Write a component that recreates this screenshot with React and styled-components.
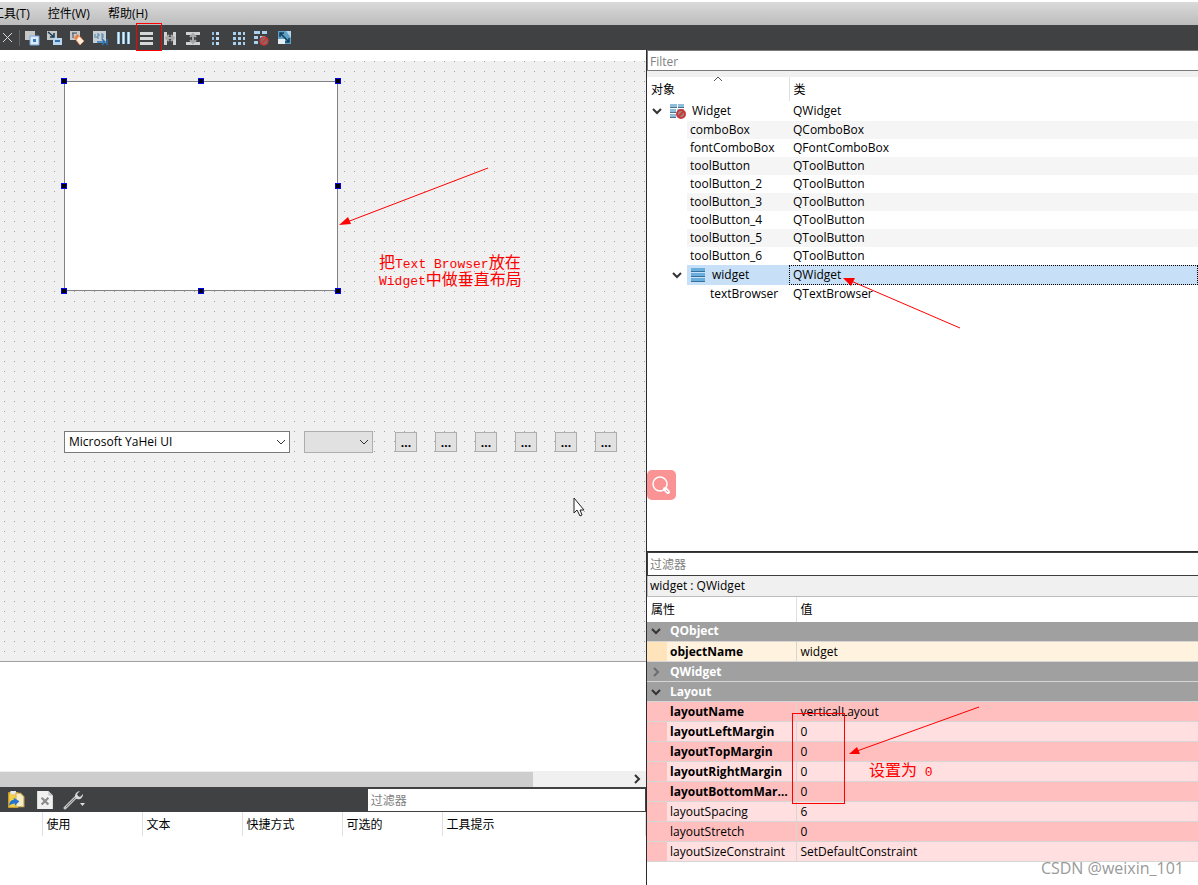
import React from 'react';
import styled, { createGlobalStyle } from 'styled-components';

const GlobalStyle = createGlobalStyle`
  * {
    box-sizing: border-box;
  }
  body {
    margin: 0;
    background: white;
    color: black;
    font-family: 'Open Sans', 'Noto Sans CJK SC', sans-serif;
    font-size: 12px;
    line-height: 18px;
  }
  button, input, select {
    font: inherit;
    color: inherit;
    margin: 0;
    padding: 0;
    border: none;
    border-radius: 0;
  }
  table {
    border-collapse: collapse;
    border-spacing: 0;
  }
  th, td {
    padding: 0;
    font-weight: normal;
    text-align: left;
    white-space: nowrap;
  }
`;

const Page = styled.div`
  display: flex;
  flex-direction: column;
  min-height: 100vh;
  overflow: hidden;
`;

// The first menu is scrolled partly out of view
const MenuBar = styled.nav`
  display: flex;
  align-items: center;
  height: 23px;
  margin-top: 2px;
  margin-left: -17px;
  background: linear-gradient(#dadada, #bcbcbc);
`;

const MenuItem = styled.button`
  padding: 0 9px;
  background: none;
  white-space: nowrap;
`;

const ToolBar = styled.div`
  display: flex;
  align-items: center;
  height: 25px;
  background: #404142;
`;

const ToolBarButton = styled.button`
  position: relative;
  display: grid;
  place-items: center;
  width: ${({ $width }) => $width || 23}px;
  height: 23px;
  background: none;
`;

const Separator = styled.span`
  width: 1px;
  height: 16px;
  margin-left: 4px;
  background: #626364;
`;

const Highlight = styled.span`
  position: absolute;
  top: -3px;
  left: 1px;
  width: 26px;
  height: 28px;
  border: 1px solid red;
`;

const Main = styled.main`
  display: grid;
  grid-template-columns: minmax(0, 647fr) minmax(0, 551fr);
  flex: 1;
`;

const LeftSide = styled.div`
  display: flex;
  flex-direction: column;
  border-right: 1px solid #2a2b2c;
`;

const RightSide = styled.div`
  display: flex;
  flex-direction: column;
`;

// Form being edited, with a dot every 10px
const FormCanvas = styled.section`
  position: relative;
  flex: 1;
  min-height: 480px;
  margin-top: 11px;
  border-bottom: 1px solid #a0a0a0;
  background: conic-gradient(at 1px 1px, #f0f0f0 75%, #a0a0a0 0) 4px 0 / 10px 10px;
`;

const SelectedWidget = styled.div`
  position: absolute;
  left: 64px;
  top: 20px;
  width: 274px;
  height: 210px;
  box-shadow: inset 0 0 0 1px #828282;
  background: white;
`;

const Handle = styled.span`
  position: absolute;
  left: ${({ $x }) => $x};
  top: ${({ $y }) => $y};
  width: 6px;
  height: 6px;
  margin: -3px;
  border: 1px solid #0000f0;
  background: black;
`;

const FormRow = styled.div`
  position: absolute;
  left: 64px;
  top: 370px;
  display: flex;
  align-items: center;
`;

const ComboWrap = styled.label`
  display: grid;
  align-items: center;
  width: ${({ $width }) => $width}px;
  margin-right: ${({ $gap }) => $gap}px;

  > * {
    grid-area: 1 / 1;
  }
  > svg {
    justify-self: end;
    margin-right: 4px;
    pointer-events: none;
  }
`;

const Combo = styled.select`
  appearance: none;
  width: 100%;
  height: 22px;
  padding: 0 4px;
  border: 1px solid ${({ $flat }) => ($flat ? '#adadad' : '#7a7a7a')};
  background: ${({ $flat }) => ($flat ? '#e1e1e1' : 'white')};
`;

const ToolButton = styled.button`
  width: 22px;
  height: 20px;
  margin-right: 18px;
  border: 1px solid #adadad;
  background: #e1e1e1;
  font-weight: bold;
  line-height: 20px;
`;

const Note = styled.p`
  position: absolute;
  left: ${({ $left }) => $left}px;
  top: ${({ $top }) => $top}px;
  margin: 0;
  color: red;
  font-family: 'Liberation Mono', 'Noto Sans CJK SC', monospace;
  font-size: 16px;
  line-height: 16px;
  white-space: nowrap;
`;

const NoteLatin = styled.span`
  font-size: 13px;
`;

const Overlay = styled.svg`
  position: absolute;
  left: ${({ $left }) => $left}px;
  top: ${({ $top }) => $top}px;
  overflow: visible;
  pointer-events: none;
`;

const EmptyArea = styled.div`
  height: 109px;
  background: white;
`;

const ScrollBar = styled.div`
  display: flex;
  align-items: center;
  justify-content: space-between;
  height: 16px;
  padding-right: 4px;
  background: #f0f0f0;
`;

const ScrollThumb = styled.div`
  width: 83%;
  height: 15px;
  background: #cdcdcd;
`;

const ActionBar = styled.div`
  display: flex;
  align-items: center;
  justify-content: space-between;
  height: 25px;
  padding-right: 1px;
  background: #404142;
`;

const ActionButtons = styled.div`
  display: flex;
  align-items: center;
  gap: 6px;
  padding-left: 4px;
`;

const FilterInput = styled.input`
  width: 100%;
  height: ${({ $height }) => $height}px;
  padding: 1px 2px 0;
  border: 1px solid ${({ $edge }) => $edge || 'white'};
  border-width: 1px 0 1px 1px;
  background: white;
  outline: none;

  &::placeholder {
    color: #808080;
    opacity: 1;
  }
`;

const ActionFilter = styled.div`
  display: flex;
  width: 43%;
`;

const ActionTable = styled.table`
  width: 100%;
  height: 24px;
  margin-bottom: 49px;
  table-layout: fixed;

  th {
    width: 100px;
    padding-top: 2px;
    padding-left: 4px;
    border-right: 1px solid #e0e0e0;
  }
  th:first-child {
    width: 42px;
  }
  th:last-child {
    width: auto;
  }
`;

const TreePanel = styled.section`
  position: relative;
  flex: 1;
  border-top: 6px solid #f0f0f0;
  background: white;
`;

const TreeTable = styled.table`
  width: 100%;
  table-layout: fixed;
`;

const TreeHead = styled.th`
  position: relative;
  width: ${({ $width }) => $width || 'auto'};
  height: 24px;
  padding-top: 2px;
  padding-left: 4px;
  border-right: ${({ $line }) => ($line ? '1px solid #e0e0e0' : 'none')};

  svg {
    position: absolute;
    left: 66px;
    top: -3px;
  }
`;

const rowColor = ({ $selected, $shaded }) => {
  if ($selected) return '#c7e0f7';
  return $shaded ? '#f5f5f5' : 'white';
};

const TreeRow = styled.tr`
  height: ${({ $tall }) => ($tall ? 20 : 18)}px;

  td:first-child {
    background: linear-gradient(to right, white 40px, transparent 40px), ${rowColor};
  }
  td:last-child {
    padding-left: 4px;
    background: ${rowColor};
    outline: ${({ $selected }) => ($selected ? '1px dotted black' : 'none')};
    outline-offset: -1px;
  }
`;

const TreeName = styled.div`
  display: flex;
  align-items: center;
  gap: 6px;
  padding-left: ${({ $indent }) => $indent}px;
`;

const TreeArrow = styled.span`
  display: flex;
  margin-right: 2px;
`;

const SearchButton = styled.button`
  position: absolute;
  left: 0;
  bottom: 51px;
  display: grid;
  place-items: center;
  width: 29px;
  height: 30px;
  border-radius: 5px;
  background: #fa9393;
`;

const PropertyPanel = styled.section`
  position: relative;
  padding-bottom: 23px;
  border-top: 1px solid #2a2b2c;
`;

const ObjectLabel = styled.div`
  height: 21px;
  padding: 1px 2px;
  border: 1px solid #bcbcbc;
  border-width: 0 0 1px 1px;
  background: #f0f0f0;
`;

const PropertyTable = styled.table`
  width: 100%;
  table-layout: fixed;

  th {
    height: 25px;
    padding-top: 2px;
    padding-left: 4px;
  }
  th:first-child {
    width: 149px;
    border-right: 1px solid #e0e0e0;
  }
`;

const GroupRow = styled.tr`
  height: 20px;
  border-bottom: 1px solid #d6d6d6;
  background: #a0a0a0;
`;

const GroupName = styled.div`
  display: flex;
  align-items: center;
  gap: 9px;
  padding-left: 4px;
  color: white;
  font-weight: bold;
`;

const PropertyRow = styled.tr`
  height: 20px;
  border-bottom: 1px solid #d6d6d6;
  background: ${({ $color }) => $color};

  td:first-child {
    padding-left: 23px;
    padding-right: 4px;
    border-right: 1px solid #d6d6d6;
    background: linear-gradient(to right, ${({ $edge }) => $edge} 20px, transparent 20px);
    font-weight: ${({ $changed }) => ($changed ? 'bold' : 'normal')};
    overflow: hidden;
    text-overflow: ellipsis;
  }
  td:last-child {
    padding-left: 4px;
  }
`;

const MarkBox = styled.span`
  position: absolute;
  left: 145px;
  top: 161px;
  width: 53px;
  height: 91px;
  border: 1px solid red;
`;

const Watermark = styled.span`
  position: absolute;
  right: 14px;
  bottom: 7px;
  color: #9a9a9a;
  font-size: 16px;
  line-height: 20px;
`;

const Chevron = ({ color = '#333', width = 1, direction = 'down' }) => {
  const paths = {
    down: 'M1 3 L5 7 L9 3',
    up: 'M1 7 L5 3 L9 7',
    right: 'M3 1 L7 5 L3 9',
  };
  return (
    <svg width="10" height="10" viewBox="0 0 10 10" fill="none" stroke={color} strokeWidth={width}>
      <path d={paths[direction]} />
    </svg>
  );
};

const Icon = ({ children, size = 16 }) => (
  <svg width={size} height={size} viewBox="0 0 16 16" fill="none">{children}</svg>
);

const BreakLayoutShapes = () => (
  <>
    <path d="M0 1h7v4H0zM8 1h6v4H8zM0 6h6v4H0zM0 11h6v4H0z" fill="#8fbedd" />
    <path d="M0 4h7v1H0zM8 4h6v1H8zM0 9h6v1H0zM0 14h6v1H0z" fill="#4d7391" />
    <path d="M7 6h7v3H7z" fill="#a8c4d6" />
    <circle cx="11" cy="11" r="4" fill="#a98080" stroke="#c53a3a" strokeWidth="2" />
    <path d="M8 14l6-6" stroke="#c53a3a" strokeWidth="2" />
  </>
);

const tools = [
  {
    name: 'Edit Widgets',
    icon: (
      <>
        <path d="M1 1h10v9H1z" fill="#c5c7c8" />
        <path d="M6 6h9v9H6z" fill="#dcebfa" stroke="#78a6d4" />
        <path d="M9 9h3v3H9z" fill="#347bc1" />
      </>
    ),
  },
  {
    name: 'Edit Signals/Slots',
    icon: (
      <>
        <path d="M0 1h10v9H0z" fill="#c5c7c8" />
        <path d="M6 8h9v7H6z" fill="#b9d6f0" />
        <path d="M8 11h5" stroke="#3770a9" strokeWidth="2" />
        <path d="M1 2l6 5M7 3v4H3" stroke="#173b55" strokeWidth="1.5" />
      </>
    ),
  },
  {
    name: 'Edit Buddies',
    icon: (
      <>
        <path d="M0 1h10v9H0z" fill="#c5c7c8" />
        <path d="M2 3h5M3 3v5" stroke="#3c4a55" />
        <path d="M4 8l3-4 5 4-4 4z" fill="#ef8045" />
        <path d="M9 6l5 5-4 4-4-5z" fill="#fff0df" stroke="#f0905a" />
      </>
    ),
  },
  {
    name: 'Edit Tab Order',
    icon: (
      <>
        <path d="M0 1h13v12H0z" fill="#c8d0d7" />
        <path d="M2 4v4M4 4h2v2H4v2h2M8 4h2v4H8M8 6h2" stroke="#5183a8" />
        <path d="M4 12h7M9 9l3 3-3 3M14 9v6" stroke="#2e72b4" strokeWidth="1.5" />
      </>
    ),
  },
  {
    name: 'Lay Out Horizontally',
    icon: (
      <>
        <path d="M1 2h3v12H1zM6 2h3v12H6zM11 2h3v12h-3z" fill="#96c4e6" />
        <path d="M2 2h1v12H2zM7 2h1v12H7zM12 2h1v12h-1z" fill="#dceffb" />
      </>
    ),
  },
  {
    name: 'Lay Out Vertically',
    marked: true,
    icon: <path d="M1 2h13v3H1zM1 7h13v3H1zM1 12h13v3H1z" fill="#d7d7d7" />,
  },
  {
    name: 'Lay Out Horizontally in Splitter',
    icon: (
      <>
        <path d="M2 2h3v13H2zM11 2h3v13h-3z" fill="#d2d2d2" />
        <path d="M5 8h6M7 5L4 8l3 3M9 5l3 3-3 3" stroke="#aaa" strokeWidth="2" />
      </>
    ),
  },
  {
    name: 'Lay Out Vertically in Splitter',
    icon: (
      <>
        <path d="M1 2h14v3H1zM1 12h14v3H1z" fill="#d2d2d2" />
        <path d="M8 5v6M5 7l3-3 3 3M5 10l3 3 3-3" stroke="#aaa" strokeWidth="2" />
      </>
    ),
  },
  {
    name: 'Lay Out in a Form Layout',
    icon: (
      <>
        <path d="M4 2h2v3H4zM4 7h2v3H4zM4 12h2v3H4z" fill="#8fc0e5" />
        <path d="M8 2h3v3H8zM8 7h3v3H8zM8 12h3v3H8z" fill="#bddcf3" />
      </>
    ),
  },
  {
    name: 'Lay Out in a Grid',
    icon: (
      <path
        d="M2 2h3v3H2zM7 2h3v3H7zM12 2h2v3h-2zM2 7h3v3H2zM7 7h3v3H7zM12 7h2v3h-2zM2 12h3v3H2zM7 12h3v3H7zM12 12h2v3h-2z"
        fill="#a9d1ef"
      />
    ),
  },
  {
    name: 'Break Layout',
    icon: (
      <>
        <path d="M0 1h6v3H0zM8 1h5v3H8zM0 6h4v3H0zM6 6h5v2H6zM0 11h4v3H0z" fill="#a9d1ef" />
        <circle cx="10" cy="11" r="4" fill="#8a6868" stroke="#c93838" strokeWidth="1.5" />
        <path d="M7 14l6-6" stroke="#d03030" strokeWidth="1.5" />
      </>
    ),
  },
  {
    name: 'Adjust Size',
    icon: (
      <>
        <path d="M1 1h13v13H1z" fill="#5fa0c8" />
        <path d="M1 9h7v5H1z" fill="#e4edf2" />
        <path d="M9 1h5v7z" fill="#b3d4e8" />
        <path d="M3 3l9 9M3 7V3h4M12 8v4H8" stroke="#123f5d" strokeWidth="1.5" />
      </>
    ),
  },
];

const objects = [
  { name: 'comboBox', type: 'QComboBox' },
  { name: 'fontComboBox', type: 'QFontComboBox' },
  { name: 'toolButton', type: 'QToolButton' },
  { name: 'toolButton_2', type: 'QToolButton' },
  { name: 'toolButton_3', type: 'QToolButton' },
  { name: 'toolButton_4', type: 'QToolButton' },
  { name: 'toolButton_5', type: 'QToolButton' },
  { name: 'toolButton_6', type: 'QToolButton' },
];

const layoutProperties = [
  { name: 'layoutName', value: 'verticalLayout', changed: true },
  { name: 'layoutLeftMargin', value: '0', changed: true },
  { name: 'layoutTopMargin', value: '0', changed: true },
  { name: 'layoutRightMargin', value: '0', changed: true },
  { name: 'layoutBottomMargin', value: '0', changed: true },
  { name: 'layoutSpacing', value: '6' },
  { name: 'layoutStretch', value: '0' },
  { name: 'layoutSizeConstraint', value: 'SetDefaultConstraint' },
];

const handles = [
  ['0', '0'], ['50%', '0'], ['100%', '0'],
  ['0', '50%'], ['100%', '50%'],
  ['0', '100%'], ['50%', '100%'], ['100%', '100%'],
];

const FormEditor = () => (
  <FormCanvas>
    <SelectedWidget>
      {handles.map(([x, y]) => <Handle key={`${x} ${y}`} $x={x} $y={y} />)}
    </SelectedWidget>
    <Overlay $left={339} $top={106} width="149" height="58">
      <path d="M149 1L8 55" stroke="red" />
      <path d="M0 58L9 50L12 57z" fill="red" />
    </Overlay>
    <Note $left={379} $top={195}>
      把<NoteLatin>Text Browser</NoteLatin>放在
      <br />
      <NoteLatin>Widget</NoteLatin>中做垂直布局
    </Note>
    <FormRow>
      <ComboWrap $width={226} $gap={14}>
        <Combo aria-label="Font">
          <option>Microsoft YaHei UI</option>
        </Combo>
        <Chevron />
      </ComboWrap>
      <ComboWrap $width={69} $gap={22}>
        <Combo aria-label="Size" $flat />
        <Chevron />
      </ComboWrap>
      {[1, 2, 3, 4, 5, 6].map((n) => <ToolButton key={n} type="button">...</ToolButton>)}
    </FormRow>
    <Overlay $left={573} $top={436} width="12" height="20" viewBox="0 0 12 20">
      <path d="M1 1v15l3-3 3 6 2-1-2-5h4z" fill="white" stroke="#222" />
    </Overlay>
  </FormCanvas>
);

const ActionEditor = () => (
  <>
    <ActionBar>
      <ActionButtons>
        <ToolBarButton type="button" aria-label="Copy">
          <Icon size={18}>
            <path d="M1 1h9v14H1z" fill="#d9a928" />
            <path d="M2 3h7v11H2z" fill="#f3cf4a" />
            <path d="M3 0h5v3H3z" fill="#e8e8e8" />
            <path d="M8 2h4l3 3v9H8z" fill="#f7ecc8" stroke="#d4b25a" />
            <path d="M2 13c0-4 2-5 4-5V6l5 3-4 4v-2c-2 0-4 1-5 2z" fill="#2575d0" />
          </Icon>
        </ToolBarButton>
        <ToolBarButton type="button" aria-label="Delete">
          <Icon size={18}>
            <path d="M1 0h10l4 4v12H1z" fill="#f0f0f0" />
            <path d="M11 0v4h4z" fill="#c4c4c4" />
            <path d="M5 6l6 6M11 6l-6 6" stroke="#8b8b8b" strokeWidth="2" />
          </Icon>
        </ToolBarButton>
        <ToolBarButton type="button" aria-label="Configure">
          <svg width="22" height="20" viewBox="0 0 22 20" fill="none">
            <path d="M2 18L13 7" stroke="#c4c4c4" strokeWidth="3" strokeLinecap="round" />
            <path d="M3 17L13 7" stroke="#777" />
            <path d="M17 1l-3 3 1 2 2 1 3-3c0 4-3 6-6 5s-3-7 3-8z" fill="#d8d8d8" />
            <path d="M17 13h5l-2.500 3z" fill="#e0e0e0" />
          </svg>
        </ToolBarButton>
      </ActionButtons>
      <ActionFilter>
        <FilterInput $height={22} aria-label="过滤器" placeholder="过滤器" />
      </ActionFilter>
    </ActionBar>
    <ActionTable>
      <thead>
        <tr>
          <th aria-label="名称" />
          <th>使用</th>
          <th>文本</th>
          <th>快捷方式</th>
          <th>可选的</th>
          <th>工具提示</th>
        </tr>
      </thead>
    </ActionTable>
  </>
);

const ObjectInspector = () => (
  <>
    <FilterInput $height={21} $edge="#7a7a7a" aria-label="Filter" placeholder="Filter" />
    <TreePanel>
      <TreeTable>
        <thead>
          <tr>
            <TreeHead $width="142px" $line>
              对象
              <Chevron direction="up" color="#555" />
            </TreeHead>
            <TreeHead>类</TreeHead>
          </tr>
        </thead>
        <tbody>
          <TreeRow $tall>
            <td>
              <TreeName $indent={5}>
                <TreeArrow><Chevron width={2} /></TreeArrow>
                <Icon><BreakLayoutShapes /></Icon>
                Widget
              </TreeName>
            </td>
            <td>QWidget</td>
          </TreeRow>
          {objects.map((object, idx) => (
            <TreeRow key={object.name} $shaded={idx % 2 === 0}>
              <td><TreeName $indent={43}>{object.name}</TreeName></td>
              <td>{object.type}</td>
            </TreeRow>
          ))}
          <TreeRow $tall $selected>
            <td>
              <TreeName $indent={25}>
                <TreeArrow><Chevron width={2} /></TreeArrow>
                <Icon>
                  <path d="M1 1h14v4H1zM1 6h14v4H1zM1 11h14v4H1z" fill="#6aaedc" />
                  <path d="M1 4h14v1H1zM1 9h14v1H1zM1 14h14v1H1z" fill="#35719d" />
                </Icon>
                widget
              </TreeName>
            </td>
            <td>QWidget</td>
          </TreeRow>
          <TreeRow>
            <td><TreeName $indent={63}>textBrowser</TreeName></td>
            <td>QTextBrowser</td>
          </TreeRow>
        </tbody>
      </TreeTable>
      <Overlay $left={196} $top={200} width="117" height="52">
        <path d="M117 51L8 4" stroke="red" />
        <path d="M0 1L12 1L8 9z" fill="red" />
      </Overlay>
      <SearchButton type="button" aria-label="Search">
        <svg width="21" height="20" viewBox="0 0 21 20" fill="none" stroke="white">
          <circle cx="9" cy="9" r="7" strokeWidth="1.5" />
          <path d="M14 14l3 3" strokeWidth="4" strokeLinecap="round" />
          <path d="M15 15l2 2" stroke="#fa9393" />
        </svg>
      </SearchButton>
    </TreePanel>
  </>
);

const PropertyEditor = () => (
  <PropertyPanel>
    <FilterInput $height={24} $edge="#3c3d3e" aria-label="过滤器" placeholder="过滤器" />
    <ObjectLabel>widget : QWidget</ObjectLabel>
    <PropertyTable>
      <thead>
        <tr>
          <th>属性</th>
          <th>值</th>
        </tr>
      </thead>
      <tbody>
        <GroupRow>
          <td colSpan="2"><GroupName><Chevron width={2} />QObject</GroupName></td>
        </GroupRow>
        <PropertyRow $color="#fff2df" $edge="#ffe4bb" $changed>
          <td>objectName</td>
          <td>widget</td>
        </PropertyRow>
        <GroupRow>
          <td colSpan="2"><GroupName><Chevron width={2} direction="right" color="#6c6c6c" />QWidget</GroupName></td>
        </GroupRow>
        <GroupRow>
          <td colSpan="2"><GroupName><Chevron width={2} />Layout</GroupName></td>
        </GroupRow>
        {layoutProperties.map((property, idx) => (
          <PropertyRow
            key={property.name}
            $color={idx % 2 === 0 ? '#ffbfbf' : '#ffdfdf'}
            $edge="#ffbfbf"
            $changed={property.changed}
          >
            <td>{property.name}</td>
            <td>{property.value}</td>
          </PropertyRow>
        ))}
      </tbody>
    </PropertyTable>
    <MarkBox />
    <Overlay $left={202} $top={154} width="130" height="48">
      <path d="M130 1L8 45" stroke="red" />
      <path d="M0 48L8 41L11 48z" fill="red" />
    </Overlay>
    <Note $left={222} $top={212}>
      设置为<NoteLatin> 0</NoteLatin>
    </Note>
    <Watermark>CSDN @weixin_101</Watermark>
  </PropertyPanel>
);

const App = () => (
  <Page>
    <GlobalStyle />
    <MenuBar>
      <MenuItem type="button">工具(T)</MenuItem>
      <MenuItem type="button">控件(W)</MenuItem>
      <MenuItem type="button">帮助(H)</MenuItem>
    </MenuBar>
    <ToolBar>
      <ToolBarButton type="button" aria-label="Close" $width={15}>
        <svg width="11" height="11" viewBox="0 0 11 11" stroke="#ddd">
          <path d="M1 1l9 9M10 1l-9 9" />
        </svg>
      </ToolBarButton>
      <Separator />
      {tools.map((tool) => (
        <ToolBarButton key={tool.name} type="button" aria-label={tool.name}>
          <Icon>{tool.icon}</Icon>
          {tool.marked && <Highlight />}
        </ToolBarButton>
      ))}
    </ToolBar>
    <Main>
      <LeftSide>
        <FormEditor />
        <EmptyArea />
        <ScrollBar>
          <ScrollThumb />
          <Chevron width={2} direction="right" />
        </ScrollBar>
        <ActionEditor />
      </LeftSide>
      <RightSide>
        <ObjectInspector />
        <PropertyEditor />
      </RightSide>
    </Main>
  </Page>
);

export default App;
